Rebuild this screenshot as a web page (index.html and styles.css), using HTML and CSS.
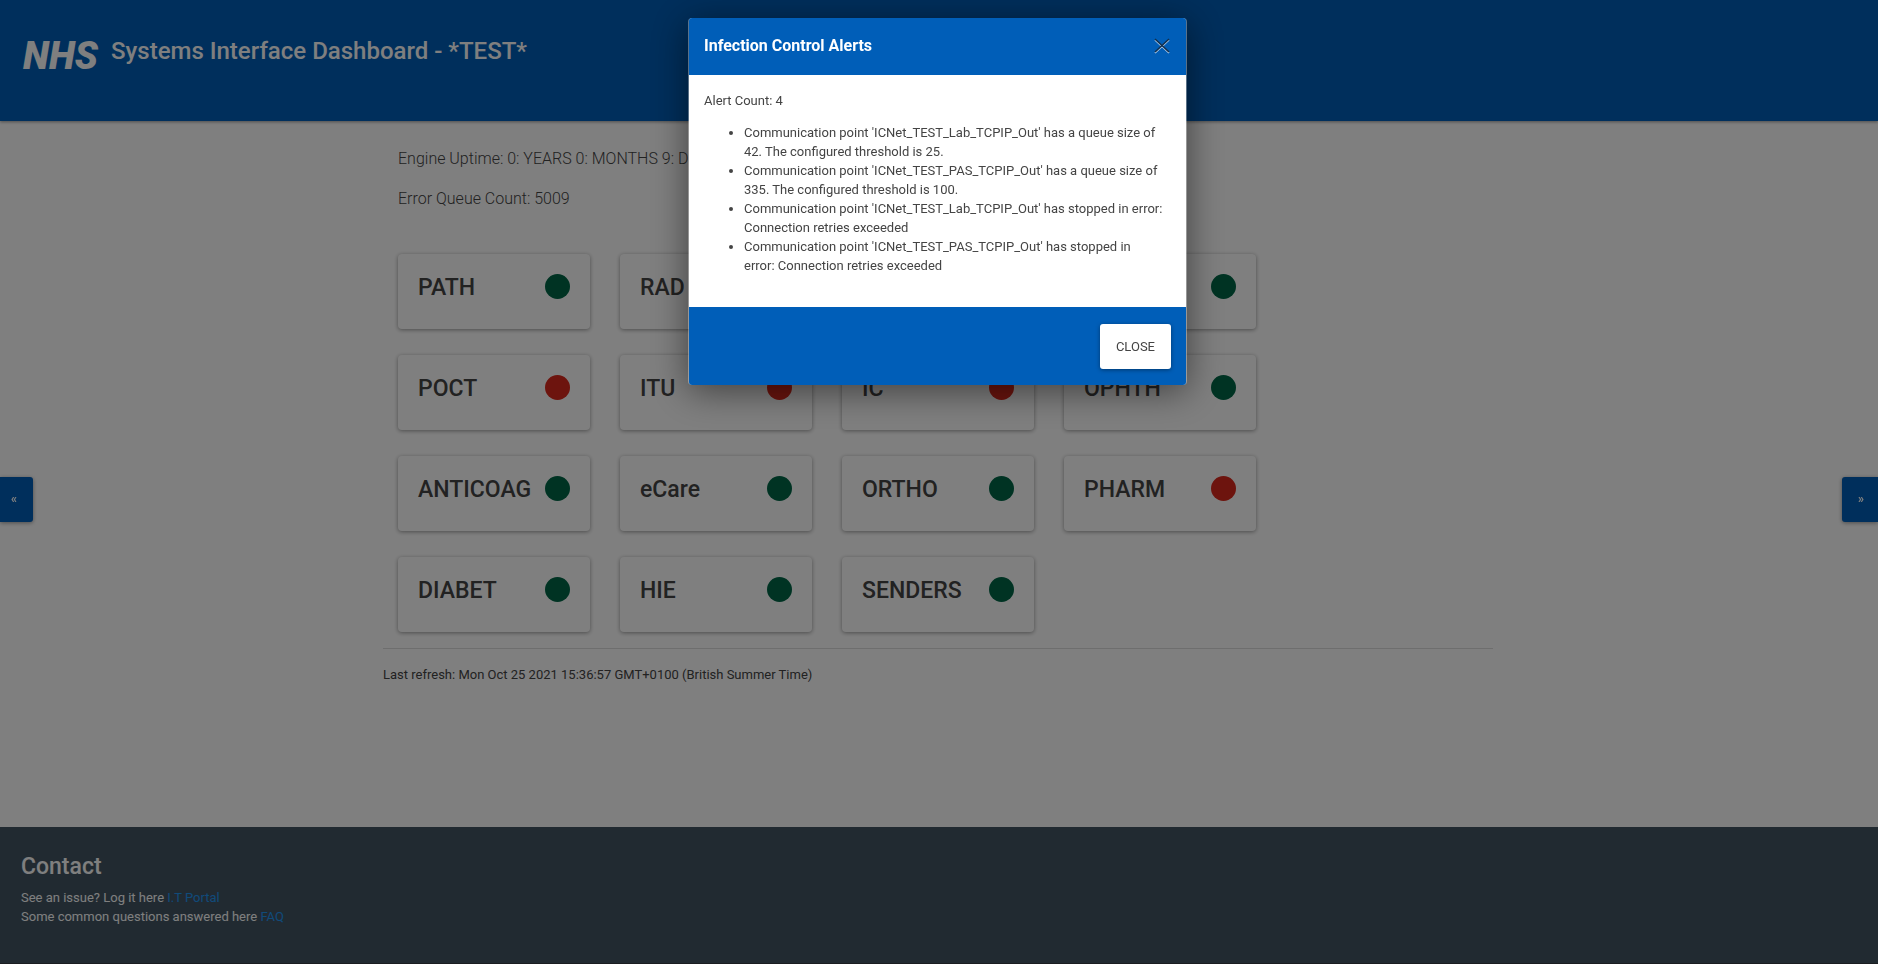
FILE: index.html
```html
<!DOCTYPE html>
<html lang="en">
<head>
<meta charset="utf-8">
<title>Systems Interface Dashboard</title>
<link rel="stylesheet" href="styles.css">
</head>
<body>
<div class="page">
  <header class="banner">
    <svg class="logo" viewBox="0 0 76 32" role="img" aria-label="NHS"><text class="logo-text" x="0" y="28">NHS</text></svg>
    <h1 class="title">Systems Interface Dashboard - *TEST*</h1>
  </header>
  <div class="stage">
  <main class="content">
    <div class="summary">
      <p class="lead">Engine Uptime: 0: YEARS 0: MONTHS 9: D</p>
      <p class="lead">Error Queue Count: 5009</p>
    </div>
    <section class="cards">
      <article class="card"><h2 class="heading">PATH</h2><span class="dot"></span></article>
      <article class="card"><h2 class="heading">RAD</h2><span class="dot"></span></article>
      <article class="card"><span class="dot"></span></article>
      <article class="card"><span class="dot"></span></article>
      <article class="card"><h2 class="heading">POCT</h2><span class="dot dot-error"></span></article>
      <article class="card"><h2 class="heading">ITU</h2><span class="dot dot-error"></span></article>
      <article class="card"><h2 class="heading">IC</h2><span class="dot dot-error"></span></article>
      <article class="card"><h2 class="heading">OPHTH</h2><span class="dot"></span></article>
      <article class="card"><h2 class="heading">ANTICOAG</h2><span class="dot"></span></article>
      <article class="card"><h2 class="heading">eCare</h2><span class="dot"></span></article>
      <article class="card"><h2 class="heading">ORTHO</h2><span class="dot"></span></article>
      <article class="card"><h2 class="heading">PHARM</h2><span class="dot dot-error"></span></article>
      <article class="card"><h2 class="heading">DIABET</h2><span class="dot"></span></article>
      <article class="card"><h2 class="heading">HIE</h2><span class="dot"></span></article>
      <article class="card"><h2 class="heading">SENDERS</h2><span class="dot"></span></article>
    </section>
    <hr class="rule">
    <p class="refresh">Last refresh: Mon Oct 25 2021 15:36:57 GMT+0100 (British Summer Time)</p>
  </main>
  </div>
  <footer class="footer">
    <h2 class="heading">Contact</h2>
    <p class="footer-line">See an issue? Log it here <a class="link" href="#">I.T Portal</a></p>
    <p class="footer-line">Some common questions answered here <a class="link" href="#">FAQ</a></p>
  </footer>
  <button class="pager pager-prev" type="button">«</button>
  <button class="pager pager-next" type="button">»</button>
</div>
<div class="backdrop">
  <div class="modal" role="dialog" aria-modal="true" aria-labelledby="modal-title">
    <div class="modal-header">
      <h2 class="modal-title" id="modal-title">Infection Control Alerts</h2>
      <button class="dismiss" type="button" aria-label="Dismiss">
        <svg class="dismiss-icon" viewBox="0 0 16 16"><path class="cross-light" d="M1 2 15 15M15 2 1 15"/><path class="cross-dark" d="M1 1 15 14M15 1 1 14"/></svg>
      </button>
    </div>
    <div class="modal-body">
      <p class="count">Alert Count: 4</p>
      <ul class="alerts">
        <li>Communication point 'ICNet_TEST_Lab_TCPIP_Out' has a queue size of 42. The configured threshold is 25.</li>
        <li>Communication point 'ICNet_TEST_PAS_TCPIP_Out' has a queue size of 335. The configured threshold is 100.</li>
        <li>Communication point 'ICNet_TEST_Lab_TCPIP_Out' has stopped in error: Connection retries exceeded</li>
        <li>Communication point 'ICNet_TEST_PAS_TCPIP_Out' has stopped in<br>error: Connection retries exceeded</li>
      </ul>
    </div>
    <div class="modal-footer"><button class="close" type="button">CLOSE</button></div>
  </div>
</div>
</body>
</html>
```
FILE: styles.css
```css
* { box-sizing: border-box; }
body {
  margin: 0;
  font: 13px/19px Roboto, "Liberation Sans", sans-serif;
  color: #444;
  background: #fff;
}
h1, h2, p, ul { margin: 0; }
button { font: inherit; border: 0; cursor: pointer; }

.page { display: flex; flex-direction: column; min-height: 100vh; }
.title { font-size: 24px; line-height: 28px; font-weight: 500; }
.heading { font-size: 23px; line-height: 28px; font-weight: 500; }

.banner {
  display: flex;
  align-items: flex-start;
  gap: 12px;
  height: 121px;
  padding: 37px 23px 0;
  color: #fff;
  background: #005eb8;
  box-shadow: 0 1px 3px rgba(0, 0, 0, .4);
}
.logo { width: 76px; height: 32px; margin-top: 4px; overflow: visible; }
.logo-text { font: italic 900 38px Roboto, sans-serif; fill: #fff; }

.stage { flex: 1; padding-right: 2px; }
.content { max-width: 1110px; margin: 0 auto; padding-top: 26px; }
.summary { padding: 0 15px; margin-bottom: 43px; }
.lead { font-size: 16px; line-height: 24px; font-weight: 300; margin-bottom: 16px; }

.cards { display: grid; grid-template-columns: repeat(5, 1fr); row-gap: 26px; }
.card {
  display: flex;
  align-items: flex-start;
  height: 75px;
  margin: 0 15px;
  padding: 20px;
  border-radius: 4px;
  background: #fff;
  box-shadow: 0 1px 4px rgba(0, 0, 0, .4);
}
.card:nth-child(4n + 1) { grid-column: 1; }
.dot { flex: none; width: 25px; height: 25px; margin-left: auto; border-radius: 50%; background: #006747; }
.dot-error { background: #da291c; }
.rule { border: 0; border-top: 1px solid #dcdcdc; margin: 16px 0; }
.refresh { padding-bottom: 16px; }

.footer {
  min-height: 137px;
  padding: 26px 21px;
  color: #fff;
  background: #425563;
  border-bottom: 1px solid #343a40;
}
.footer .heading { margin-bottom: 7px; }
.link { color: #2196f3; text-decoration: none; }

.pager {
  position: fixed;
  top: 477px;
  height: 45px;
  color: #fff;
  background: #005eb8;
  font-size: 12px;
  font-weight: 700;
  box-shadow: 0 1px 4px rgba(0, 0, 0, .4);
}
.pager-prev { left: 0; padding: 0 16px 0 11px; border-radius: 0 3px 3px 0; }
.pager-next { right: 0; padding: 0 14px 0 16px; border-radius: 3px 0 0 3px; }

.backdrop {
  position: fixed;
  inset: 0;
  display: flex;
  justify-content: center;
  align-items: flex-start;
  padding: 18px 3px 18px 0;
  background: rgba(0, 0, 0, .5);
}
.modal {
  width: 100%;
  max-width: 499px;
  border: 1px solid rgba(255, 255, 255, .35);
  border-top: 0;
  border-bottom: 0;
  border-radius: 4px;
  background: #fff;
  background-clip: padding-box;
  box-shadow: 0 6px 36px rgba(0, 0, 0, .5);
}
.modal-header {
  display: flex;
  justify-content: space-between;
  align-items: center;
  padding: 16px 16px 17px 15px;
  color: #fff;
  background: #005eb8;
  border-radius: 3px 3px 0 0;
}
.modal-title { font-size: 16px; line-height: 24px; font-weight: 700; }
.dismiss { display: flex; padding: 0; background: none; }
.dismiss-icon { width: 16px; height: 16px; overflow: visible; fill: none; }
.cross-light { stroke: #b4d0ec; stroke-width: 1.6; }
.cross-dark { stroke: #12304f; stroke-width: 1.6; }
.modal-body { padding: 16px 15px 32px; }
.count { margin-bottom: 13px; }
.alerts { padding-left: 40px; }
.modal-footer {
  display: flex;
  justify-content: flex-end;
  padding: 17px 15px 16px;
  background: #005eb8;
  border-radius: 0 0 3px 3px;
}
.close {
  padding: 13px 16px;
  color: #444;
  background: #fff;
  border-radius: 3px;
  box-shadow: 0 1px 4px rgba(0, 0, 0, .4);
}
```
